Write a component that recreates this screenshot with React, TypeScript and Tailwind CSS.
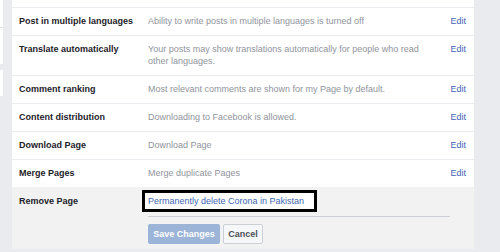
const rows = [
  { label: 'Post in multiple languages', desc: 'Ability to write posts in multiple languages is turned off' },
  {
    label: 'Translate automatically',
    desc: 'Your posts may show translations automatically for people who read other languages.',
  },
  { label: 'Comment ranking', desc: 'Most relevant comments are shown for my Page by default.' },
  { label: 'Content distribution', desc: 'Downloading to Facebook is allowed.' },
  { label: 'Download Page', desc: 'Download Page' },
  { label: 'Merge Pages', desc: 'Merge duplicate Pages' },
];

export default function App() {
  return (
    <div
      className="flex h-[252px] w-[500px] overflow-hidden bg-[#e9ebee] text-[9px] leading-[12px]"
      style={{ fontFamily: '"Liberation Sans", Arial, sans-serif' }}
    >
      {/* sidebar, only its edge shows */}
      <div className="flex w-[3px] flex-col">
        <div className="h-[28px] border-b border-[#dddfe2] bg-white" />
        <div className="h-[36px] bg-white" />
        <div className="h-[6px]" />
        <div className="h-[26px] bg-white" />
      </div>

      <div className="ml-[9px] flex h-[249px] w-[462px] flex-col bg-white">
        <div className="h-[7px]" />
        {rows.map((row) => (
          <div key={row.label} className="flex border-t border-[#e9ebee] pb-[8px] pl-[7px] pr-[8px] pt-[7px]">
            <div className="w-[129px] shrink-0 font-bold text-[#1d2129]">{row.label}</div>
            <div className="w-[286px] shrink-0 text-[#90949c]">{row.desc}</div>
            <div className="ml-auto text-[#4267b2]">Edit</div>
          </div>
        ))}

        <div className="flex flex-1 bg-[#f2f2f2] pl-[7px] pt-[3px]">
          <div className="w-[123px] shrink-0 pt-[5px] font-bold text-[#1d2129]">Remove Page</div>
          <div className="flex flex-col">
            <div className="flex h-[22px] w-[175px] items-center border-[3px] border-black bg-white pl-[3px] text-[#4267b2]">
              Permanently delete Corona in Pakistan
            </div>
            <div className="ml-[6px] mt-[4px] h-px w-[302px] bg-[#ccd0d5]" />
            <div className="ml-[6px] mt-[7px] flex gap-[3px]">
              <button className="h-[20px] w-[72px] rounded-[2px] bg-[#9cb4d8] font-bold text-white">
                Save Changes
              </button>
              <button className="h-[20px] w-[40px] rounded-[2px] border border-[#ccd0d5] bg-[#f6f7f9] font-bold text-[#4b4f56]">
                Cancel
              </button>
            </div>
          </div>
        </div>
      </div>
    </div>
  );
}
